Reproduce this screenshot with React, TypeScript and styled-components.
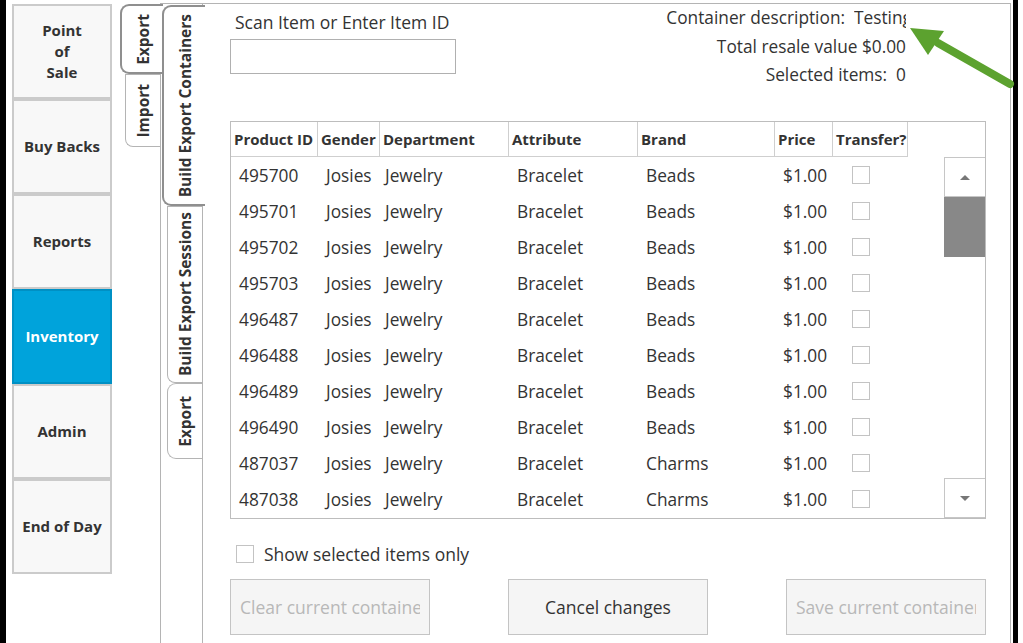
import React from 'react';
import styled, { createGlobalStyle } from 'styled-components';

const GlobalStyle = createGlobalStyle`
  html, body {
    margin: 0;
    padding: 0;
    background: #fff;
  }
  body {
    font-family: "Open Sans", "Noto Sans", sans-serif;
    color: #333;
  }
`;

const Screen = styled.div`
  position: relative;
  width: 1023px;
  height: 643px;
  box-sizing: border-box;
  padding-right: 5px;
  overflow: hidden;
  background: #fff;
`;

const Window = styled.div`
  display: flex;
  width: 1018px;
  height: 100%;
  box-sizing: border-box;
  border-left: 6px solid #000;
  border-right: 5px solid #000;
  padding-left: 6px;
`;

const Nav = styled.div`
  width: 100px;
  flex: none;
  padding-top: 4px;
  display: flex;
  flex-direction: column;
`;

const NavButton = styled.div<{ $active?: boolean }>`
  height: 95px;
  box-sizing: border-box;
  border: 2px solid ${p => (p.$active ? '#0090c4' : '#cbcbcb')};
  background: ${p => (p.$active ? '#00a3db' : '#f8f8f8')};
  color: ${p => (p.$active ? '#fff' : '#333')};
  font-weight: 700;
  font-size: 15px;
  line-height: 21px;
  display: flex;
  align-items: center;
  justify-content: center;
  text-align: center;
`;

const TabStrip = styled.div<{ $width: number }>`
  width: ${p => p.$width}px;
  flex: none;
  padding-top: 4px;
  display: flex;
  flex-direction: column;
  align-items: flex-end;
  box-sizing: border-box;
`;

const Tab = styled.div<{ $selected?: boolean; $h: number; $flatTop?: boolean }>`
  position: relative;
  z-index: ${p => (p.$selected ? 2 : 1)};
  height: ${p => p.$h}px;
  width: ${p => (p.$selected ? 43 : 35)}px;
  margin-right: ${p => (p.$selected ? -3 : 0)}px;
  box-sizing: border-box;
  border: ${p => (p.$selected ? '2px solid #8f8f8f' : '1.5px solid #b4b4b4')};
  border-right: none;
  border-radius: ${p => (p.$flatTop ? '0 0 0 8px' : '9px 0 0 9px')};
  background: #fff;
  display: flex;
  align-items: center;
  justify-content: center;
  flex: none;
`;

const TabLabel = styled.span`
  writing-mode: vertical-rl;
  transform: rotate(180deg);
  font-weight: 700;
  font-size: 15.5px;
  color: #333;
  white-space: nowrap;
`;

const OuterPanel = styled.div`
  flex: 1;
  display: flex;
  margin-top: 3px;
  margin-right: 2px;
  border-top: 1.5px solid #b4b4b4;
  border-left: 1.5px solid #b4b4b4;
  border-right: 1.5px solid #b4b4b4;
  min-width: 0;
`;

const InnerPanel = styled.div`
  flex: 1;
  min-width: 0;
  border-left: 1.5px solid #b4b4b4;
  padding: 0 24px 0 27px;
  display: flex;
  flex-direction: column;
`;

const TopRow = styled.div`
  height: 117px;
  display: flex;
  justify-content: space-between;
  flex: none;
`;

const ScanBlock = styled.div`
  padding-top: 6px;
  display: flex;
  flex-direction: column;
`;

const Label = styled.div`
  font-size: 17.5px;
  line-height: 25px;
  padding-left: 5px;
  white-space: nowrap;
`;

const TextBox = styled.div`
  margin-top: 4px;
  width: 226px;
  height: 35px;
  box-sizing: border-box;
  border: 1.5px solid #b0b0b0;
  background: #fff;
`;

const Info = styled.div`
  padding-top: 0;
  margin-right: 80px;
  display: flex;
  flex-direction: column;
  align-items: flex-end;
  font-size: 17.3px;
  line-height: 28.5px;
  white-space: pre;
`;

const Clip = styled.span<{ $w: number }>`
  display: inline-block;
  width: ${p => p.$w}px;
  overflow: hidden;
  vertical-align: top;
`;

const Table = styled.div`
  height: 398px;
  box-sizing: border-box;
  border: 1.5px solid #bdbdbd;
  display: flex;
  flex-direction: column;
  flex: none;
`;

const cols = '87px 62px 129px 129px 137px 58px 75px';

const HeadRow = styled.div`
  display: grid;
  grid-template-columns: ${cols};
  height: 35px;
  flex: none;
`;

const HeadCell = styled.div`
  border-right: 1.5px solid #cfcfcf;
  border-bottom: 1.5px solid #cfcfcf;
  font-weight: 700;
  font-size: 15px;
  line-height: 35px;
  padding-left: 3px;
  white-space: nowrap;
  overflow: hidden;
`;

const Body = styled.div`
  flex: 1;
  display: flex;
  justify-content: space-between;
  min-height: 0;
`;

const Rows = styled.div`
  display: flex;
  flex-direction: column;
`;

const Row = styled.div`
  display: grid;
  grid-template-columns: ${cols};
  height: 36px;
  align-items: center;
`;

const Cell = styled.div<{ $pad: number }>`
  padding-left: ${p => p.$pad}px;
  font-size: 17.3px;
  white-space: nowrap;
`;

const Box = styled.div<{ $size?: number }>`
  width: ${p => p.$size ?? 18}px;
  height: ${p => p.$size ?? 18}px;
  box-sizing: border-box;
  border: 1.5px solid #c3c3c3;
  background: #fff;
  flex: none;
`;

const Scrollbar = styled.div`
  width: 41px;
  display: flex;
  flex-direction: column;
`;

const ScrollButton = styled.div`
  height: 40px;
  box-sizing: border-box;
  border: 1.5px solid #c6c6c6;
  border-right: none;
  display: flex;
  align-items: center;
  justify-content: center;
  background: #fff;
  flex: none;
`;

const Arrow = styled.div<{ $down?: boolean }>`
  width: 0;
  height: 0;
  border-left: 5px solid transparent;
  border-right: 5px solid transparent;
  ${p => (p.$down ? 'border-top: 5px solid #777;' : 'border-bottom: 5px solid #777;')}
`;

const Thumb = styled.div`
  height: 60px;
  background: #888;
  flex: none;
`;

const Track = styled.div`
  flex: 1;
`;

const CheckRow = styled.label`
  margin-top: 25px;
  display: flex;
  align-items: center;
  gap: 10px;
  padding-left: 6px;
  font-size: 17.5px;
  height: 20px;
  white-space: nowrap;
`;

const Buttons = styled.div`
  margin-top: 15px;
  display: flex;
  justify-content: space-between;
`;

const Button = styled.div<{ $disabled?: boolean }>`
  width: 200px;
  height: 56px;
  box-sizing: border-box;
  border: 1.5px solid #c4c4c4;
  background: #f5f5f5;
  color: ${p => (p.$disabled ? '#b8b8b8' : '#333')};
  font-size: 17.5px;
  display: flex;
  align-items: center;
  justify-content: center;
  padding: 0 9px;
  span {
    min-width: 0;
    overflow: hidden;
    white-space: nowrap;
  }
`;

const Callout = styled.svg`
  position: absolute;
  left: 900px;
  top: 18px;
`;

const navItems = [
  { label: <>Point<br />of<br />Sale</> },
  { label: 'Buy Backs' },
  { label: 'Reports' },
  { label: 'Inventory', active: true },
  { label: 'Admin' },
  { label: 'End of Day' },
];

const headers = ['Product ID', 'Gender', 'Department', 'Attribute', 'Brand', 'Price', 'Transfer?'];
const pads = [8, 8, 5, 8, 8, 8];

const items = [
  ['495700', 'Beads'],
  ['495701', 'Beads'],
  ['495702', 'Beads'],
  ['495703', 'Beads'],
  ['496487', 'Beads'],
  ['496488', 'Beads'],
  ['496489', 'Beads'],
  ['496490', 'Beads'],
  ['487037', 'Charms'],
  ['487038', 'Charms'],
];

export default function App() {
  return (
    <Screen>
      <GlobalStyle />
      <Window>
        <Nav>
          {navItems.map((n, i) => (
            <NavButton key={i} $active={n.active}>{n.label}</NavButton>
          ))}
        </Nav>
        <TabStrip $width={48}>
          <Tab $selected $h={70}><TabLabel>Export</TabLabel></Tab>
          <Tab $h={73} $flatTop><TabLabel>Import</TabLabel></Tab>
        </TabStrip>
        <OuterPanel>
          <TabStrip $width={41} style={{ paddingTop: 1 }}>
            <Tab $selected $h={201}><TabLabel>Build Export Containers</TabLabel></Tab>
            <Tab $h={177} $flatTop><TabLabel>Build Export Sessions</TabLabel></Tab>
            <Tab $h={76}><TabLabel>Export</TabLabel></Tab>
          </TabStrip>
          <InnerPanel>
            <TopRow>
              <ScanBlock>
                <Label>Scan Item or Enter Item ID</Label>
                <TextBox />
              </ScanBlock>
              <Info>
                <div>Container description:  <Clip $w={52}>Testing</Clip></div>
                <div>Total resale value $0.00</div>
                <div>Selected items:  0</div>
              </Info>
            </TopRow>
            <Table>
              <HeadRow>
                {headers.map(h => <HeadCell key={h}>{h}</HeadCell>)}
              </HeadRow>
              <Body>
                <Rows>
                  {items.map(([id, brand]) => (
                    <Row key={id}>
                      {[id, 'Josies', 'Jewelry', 'Bracelet', brand, '$1.00'].map((v, i) => (
                        <Cell key={i} $pad={pads[i]}>{v}</Cell>
                      ))}
                      <Cell $pad={19}><Box /></Cell>
                    </Row>
                  ))}
                </Rows>
                <Scrollbar>
                  <ScrollButton><Arrow /></ScrollButton>
                  <Thumb />
                  <Track />
                  <ScrollButton><Arrow $down /></ScrollButton>
                </Scrollbar>
              </Body>
            </Table>
            <CheckRow>
              <Box />
              Show selected items only
            </CheckRow>
            <Buttons>
              <Button $disabled><span>Clear current container</span></Button>
              <Button><span>Cancel changes</span></Button>
              <Button $disabled><span>Save current container</span></Button>
            </Buttons>
          </InnerPanel>
        </OuterPanel>
      </Window>
      <Callout width="123" height="80" viewBox="0 0 123 80">
        <line x1="38" y1="25" x2="110" y2="66" stroke="#5ca22f" strokeWidth="8" strokeLinecap="round" />
        <polygon points="10,10 44,13 28,37" fill="#5ca22f" />
      </Callout>
    </Screen>
  );
}
